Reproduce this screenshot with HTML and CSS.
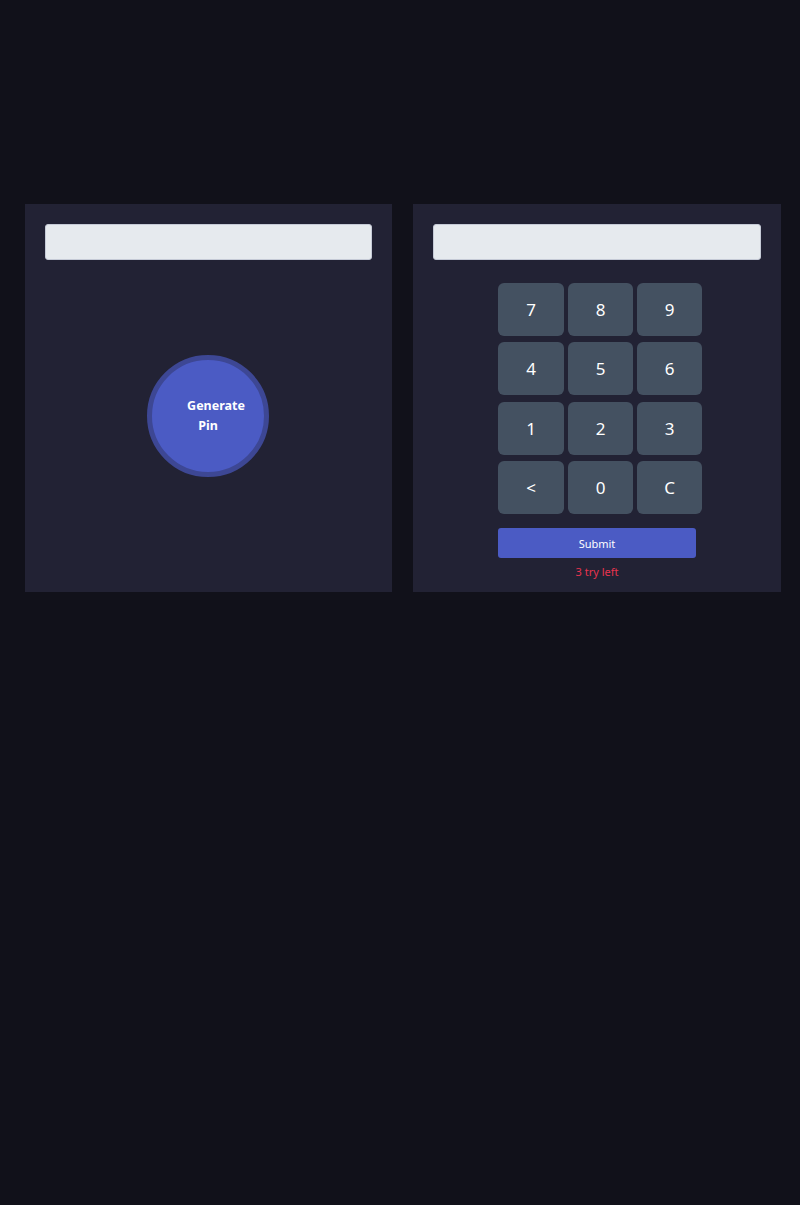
FILE: index.html
```html
<!DOCTYPE html>
<html>
<head>
<meta charset="utf-8">
<link rel="stylesheet" href="styles.css">
</head>
<body>
<main class="wrap">
  <section class="card card-left">
    <input class="display" type="text">
    <button class="generate"><span class="g1">Generate</span><span class="g2">Pin</span></button>
  </section>
  <section class="card card-right">
    <input class="display" type="text">
    <div class="pad">
      <div class="keys">
        <button class="key">7</button>
        <button class="key">8</button>
        <button class="key">9</button>
        <button class="key">4</button>
        <button class="key">5</button>
        <button class="key">6</button>
        <button class="key">1</button>
        <button class="key">2</button>
        <button class="key">3</button>
        <button class="key">&lt;</button>
        <button class="key">0</button>
        <button class="key">C</button>
      </div>
      <button class="submit">Submit</button>
    </div>
    <p class="tries">3 try left</p>
  </section>
</main>
</body>
</html>
```
FILE: styles.css
```css
html, body {
  margin: 0;
  padding: 0;
  background: #11111a;
  font-family: "Noto Sans", "Open Sans", sans-serif;
}
.wrap {
  display: flex;
  gap: 21px;
  padding: 204px 19px 0 25px;
}
.card {
  background: #222234;
  height: 388px;
  box-sizing: border-box;
  padding: 20px;
  display: flex;
  flex-direction: column;
}
.card > * { flex-shrink: 0; }
.card-left { width: 367px; align-items: center; }
.card-right { width: 368px; }
.display {
  width: 100%;
  align-self: stretch;
  height: 36px;
  box-sizing: border-box;
  background: #e6eaee;
  border: 1px solid #c5cad6;
  border-radius: 3px;
  margin: 0;
}
.generate {
  margin-top: 95px;
  width: 122px;
  height: 122px;
  border-radius: 50%;
  background: #4b5bc4;
  border: 5px solid #3d4794;
  box-sizing: border-box;
  color: #fff;
  font-family: "Noto Sans", sans-serif;
  font-weight: 700;
  font-size: 12.5px;
  line-height: 20px;
  display: flex;
  flex-direction: column;
  align-items: center;
  justify-content: center;
  padding: 0;
  margin-left: -1px;
}
.g1 { margin-left: 16px; }
.pad {
  margin: 23px 0 0 65px;
  width: 204px;
  display: flex;
  flex-direction: column;
}
.keys {
  display: grid;
  grid-template-columns: 66px 65px 65px;
  grid-auto-rows: 53px;
  column-gap: 4px;
  row-gap: 6.4px;
}
.key {
  background: #445161;
  border: none;
  border-radius: 6px;
  color: #fff;
  font-family: "Noto Sans", sans-serif;
  font-size: 17px;
  padding: 0;
}
.submit {
  margin-top: 14px;
  width: 198px;
  height: 30px;
  background: #4b5bc4;
  border: none;
  border-radius: 3px;
  color: #fff;
  font-family: "Noto Sans", sans-serif;
  font-size: 11px;
  padding: 0;
}
.tries {
  margin: 6px 0 0 0;
  text-align: center;
  color: #e8344f;
  font-size: 11px;
  line-height: 16px;
}
```
